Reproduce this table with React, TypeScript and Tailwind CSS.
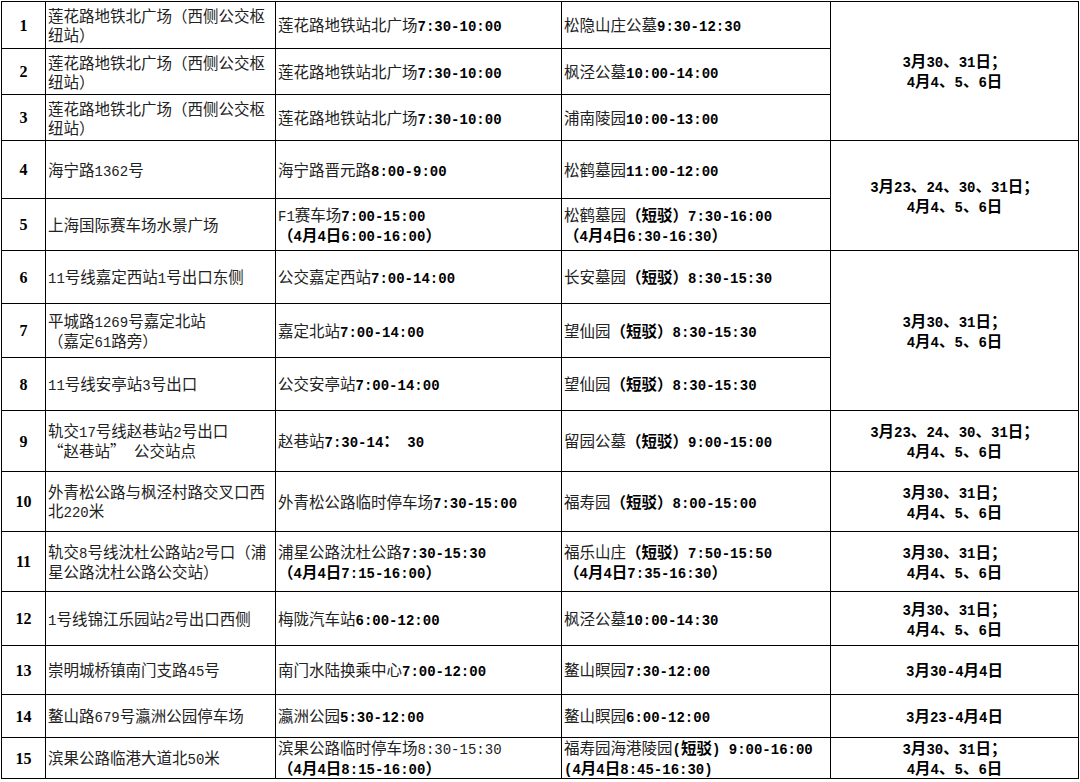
import React from 'react'

type Row = {
  no: number
  from: string
  pick: string
  dest: string
  dates?: string
  span?: number
}

const A = '3月30、31日；\n4月4、5、6日'
const B = '3月23、24、30、31日；\n4月4、5、6日'
const LH = '莲花路地铁北广场（西侧公交枢\n纽站）'

// text between * * is bold, \n starts a new line
const rows: Row[] = [
  { no: 1, from: LH, pick: '莲花路地铁站北广场*7:30-10:00*', dest: '松隐山庄公墓*9:30-12:30*', dates: A, span: 3 },
  { no: 2, from: LH, pick: '莲花路地铁站北广场*7:30-10:00*', dest: '枫泾公墓*10:00-14:00*' },
  { no: 3, from: LH, pick: '莲花路地铁站北广场*7:30-10:00*', dest: '浦南陵园*10:00-13:00*' },
  { no: 4, from: '海宁路1362号', pick: '海宁路晋元路*8:00-9:00*', dest: '松鹤墓园*11:00-12:00*', dates: B, span: 2 },
  { no: 5, from: '上海国际赛车场水景广场', pick: 'F1赛车场*7:00-15:00*\n*（4月4日6:00-16:00）*', dest: '松鹤墓园*（短驳）7:30-16:00*\n*（4月4日6:30-16:30）*' },
  { no: 6, from: '11号线嘉定西站1号出口东侧', pick: '公交嘉定西站*7:00-14:00*', dest: '长安墓园*（短驳）8:30-15:30*', dates: A, span: 3 },
  { no: 7, from: '平城路1269号嘉定北站\n（嘉定61路旁）', pick: '嘉定北站*7:00-14:00*', dest: '望仙园*（短驳）8:30-15:30*' },
  { no: 8, from: '11号线安亭站3号出口', pick: '公交安亭站*7:00-14:00*', dest: '望仙园*（短驳）8:30-15:30*' },
  { no: 9, from: '轨交17号线赵巷站2号出口\n“赵巷站” 公交站点', pick: '赵巷站*7:30-14： 30*', dest: '留园公墓*（短驳）9:00-15:00*', dates: B, span: 1 },
  { no: 10, from: '外青松公路与枫泾村路交叉口西\n北220米', pick: '外青松公路临时停车场*7:30-15:00*', dest: '福寿园*（短驳）8:00-15:00*', dates: A, span: 1 },
  { no: 11, from: '轨交8号线沈杜公路站2号口（浦\n星公路沈杜公路公交站）', pick: '浦星公路沈杜公路*7:30-15:30*\n*（4月4日7:15-16:00）*', dest: '福乐山庄*（短驳）7:50-15:50*\n*（4月4日7:35-16:30）*', dates: A, span: 1 },
  { no: 12, from: '1号线锦江乐园站2号出口西侧', pick: '梅陇汽车站*6:00-12:00*', dest: '枫泾公墓*10:00-14:30*', dates: A, span: 1 },
  { no: 13, from: '崇明城桥镇南门支路45号', pick: '南门水陆换乘中心*7:00-12:00*', dest: '鳌山瞑园*7:30-12:00*', dates: '3月30-4月4日', span: 1 },
  { no: 14, from: '鳌山路679号瀛洲公园停车场', pick: '瀛洲公园*5:30-12:00*', dest: '鳌山瞑园*6:00-12:00*', dates: '3月23-4月4日', span: 1 },
  { no: 15, from: '滨果公路临港大道北50米', pick: '滨果公路临时停车场8:30-15:30\n*（4月4日8:15-16:00）*', dest: '福寿园海港陵园*(短驳) 9:00-16:00*\n*(4月4日8:45-16:30)*', dates: A, span: 1 },
]

const heights = [
  'h-[47px]', 'h-[46px]', 'h-[46px]', 'h-[58px]', 'h-[52px]',
  'h-[53px]', 'h-[54px]', 'h-[53px]', 'h-[61px]', 'h-[60px]',
  'h-[60px]', 'h-[54px]', 'h-[49px]', 'h-[43px]', 'h-[41px]',
]

function Rich({ text, bold }: { text: string; bold?: boolean }) {
  return (
    <>
      {text.split('\n').map((line, i) => (
        <div key={i} className="whitespace-nowrap">
          {line.split('*').map((seg, j) =>
            seg ? (
              <span key={j} className={bold || j % 2 ? 'font-bold text-black' : ''}>
                {seg.split(/([\x20-\x7e]+)/).map((p, k) =>
                  k % 2 ? (
                    <span
                      key={k}
                      className="inline-block whitespace-pre leading-[15px] font-['Liberation_Mono','Noto_Sans_CJK_SC',monospace] text-[14px]"
                    >
                      {p}
                    </span>
                  ) : (
                    p
                  )
                )}
              </span>
            ) : null
          )}
        </div>
      ))}
    </>
  )
}

const cell = 'border border-black px-[2px] py-0 align-middle overflow-hidden'

export default function App() {
  return (
    <div className="bg-white w-[1080px] h-[782px] pl-px pt-px font-['Noto_Sans_CJK_SC',sans-serif] text-[15.5px] leading-[19px] text-[#222]">
      <table className="border-collapse table-fixed w-[1077px]">
        <colgroup>
          <col className="w-[44px]" />
          <col className="w-[230px]" />
          <col className="w-[286px]" />
          <col className="w-[269px]" />
          <col className="w-[248px]" />
        </colgroup>
        <tbody>
          {rows.map((r, i) => (
            <tr key={r.no} className={heights[i]}>
              <td className={`${cell} text-center font-['Liberation_Serif',serif] font-bold text-[16px] text-black`}>{r.no}</td>
              <td className={cell}>
                <Rich text={r.from} />
              </td>
              <td className={cell}>
                <Rich text={r.pick} />
              </td>
              <td className={cell}>
                <Rich text={r.dest} />
              </td>
              {r.dates && (
                <td rowSpan={r.span} className={`${cell} text-center`}>
                  <Rich text={r.dates} bold />
                </td>
              )}
            </tr>
          ))}
        </tbody>
      </table>
    </div>
  )
}
